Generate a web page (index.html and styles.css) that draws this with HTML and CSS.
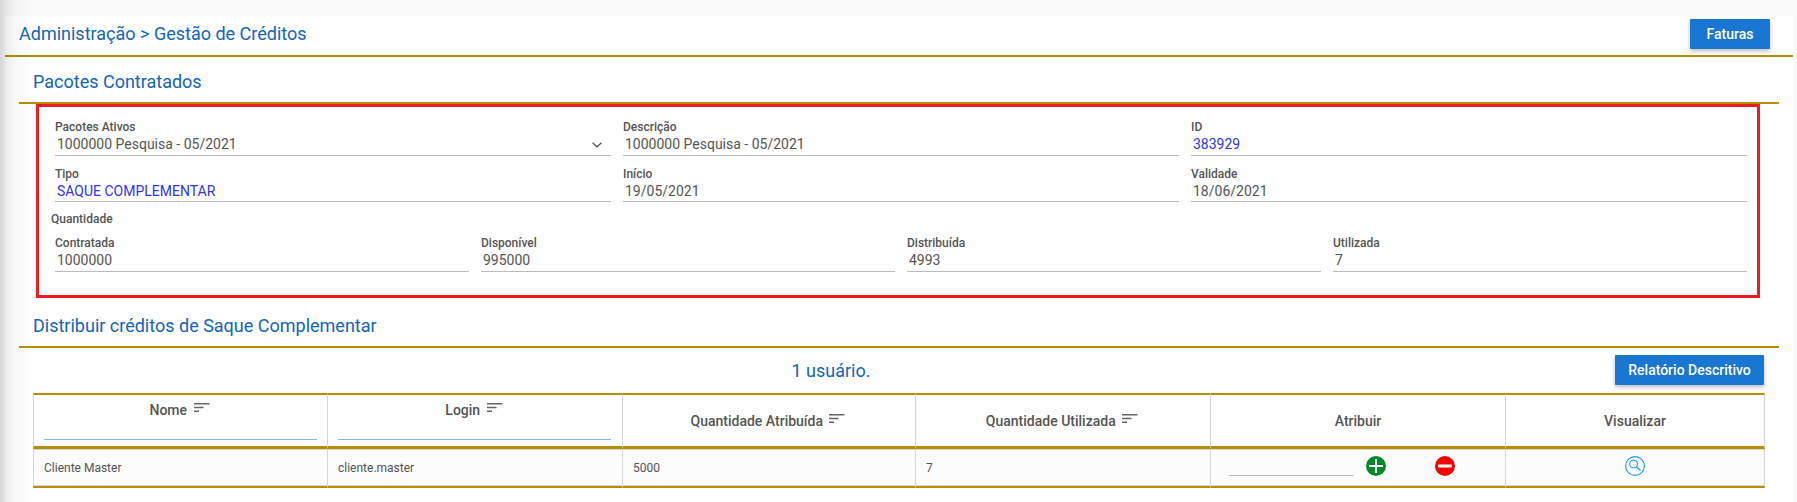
FILE: index.html
```html
<!DOCTYPE html>
<html lang="pt-BR">
<head>
<meta charset="utf-8">
<title>Gestão de Créditos</title>
<link rel="stylesheet" href="styles.css">
</head>
<body>
<div class="page">
  <div class="edge-shade"></div>
  <main class="panel">
    <header class="top-bar">
      <h1 class="page-title">Administração &gt; Gestão de Créditos</h1>
      <button class="btn" type="button">Faturas</button>
    </header>

    <section class="section">
      <h2 class="section-title section-title-first">Pacotes Contratados</h2>
      <div class="highlight-box">
        <div class="grid-three">
          <div class="field">
            <div class="field-label">Pacotes Ativos</div>
            <div class="field-value field-select">
              <span>1000000 Pesquisa - 05/2021</span>
              <svg class="chevron" width="10" height="6" viewBox="0 0 10 6"><path d="M.6.8 5 4.8 9.4.8" fill="none" stroke="#555" stroke-width="1.3"/></svg>
            </div>
          </div>
          <div class="field">
            <div class="field-label">Descrição</div>
            <div class="field-value">1000000 Pesquisa - 05/2021</div>
          </div>
          <div class="field">
            <div class="field-label">ID</div>
            <div class="field-value value-blue">383929</div>
          </div>
          <div class="field field-short">
            <div class="field-label">Tipo</div>
            <div class="field-value value-blue">SAQUE COMPLEMENTAR</div>
          </div>
          <div class="field field-short">
            <div class="field-label">Início</div>
            <div class="field-value">19/05/2021</div>
          </div>
          <div class="field field-short">
            <div class="field-label">Validade</div>
            <div class="field-value">18/06/2021</div>
          </div>
        </div>
        <div class="group-label">Quantidade</div>
        <div class="grid-four">
          <div class="field">
            <div class="field-label">Contratada</div>
            <div class="field-value">1000000</div>
          </div>
          <div class="field">
            <div class="field-label">Disponível</div>
            <div class="field-value">995000</div>
          </div>
          <div class="field">
            <div class="field-label">Distribuída</div>
            <div class="field-value">4993</div>
          </div>
          <div class="field">
            <div class="field-label">Utilizada</div>
            <div class="field-value">7</div>
          </div>
        </div>
      </div>
    </section>

    <section class="section">
      <h2 class="section-title section-title-second">Distribuir créditos de Saque Complementar</h2>
      <div class="toolbar">
        <div class="user-count">1 usuário.</div>
        <button class="btn btn-wide" type="button">Relatório Descritivo</button>
      </div>
      <table class="data-table">
        <colgroup>
          <col class="col-a"><col class="col-b"><col class="col-c"><col class="col-d"><col class="col-e"><col class="col-f">
        </colgroup>
        <thead>
          <tr>
            <th class="th-filter">
              <div class="th-label">Nome <svg class="sort" width="16" height="10" viewBox="0 0 16 10"><path d="M0 0h15.5v1.5H0zM0 3.8h9.5v1.5H0zM0 7.6h5v1.5H0z" fill="#666"/></svg></div>
              <input class="filter-input" type="text" aria-label="Nome">
            </th>
            <th class="th-filter">
              <div class="th-label">Login <svg class="sort" width="16" height="10" viewBox="0 0 16 10"><path d="M0 0h15.5v1.5H0zM0 3.8h9.5v1.5H0zM0 7.6h5v1.5H0z" fill="#666"/></svg></div>
              <input class="filter-input" type="text" aria-label="Login">
            </th>
            <th><div class="th-label">Quantidade Atribuída <svg class="sort" width="16" height="10" viewBox="0 0 16 10"><path d="M0 0h15.5v1.5H0zM0 3.8h9.5v1.5H0zM0 7.6h5v1.5H0z" fill="#666"/></svg></div></th>
            <th><div class="th-label">Quantidade Utilizada <svg class="sort" width="16" height="10" viewBox="0 0 16 10"><path d="M0 0h15.5v1.5H0zM0 3.8h9.5v1.5H0zM0 7.6h5v1.5H0z" fill="#666"/></svg></div></th>
            <th><div class="th-label">Atribuir</div></th>
            <th class="th-last"><div class="th-label">Visualizar</div></th>
          </tr>
        </thead>
        <tbody>
          <tr>
            <td>Cliente Master</td>
            <td>cliente.master</td>
            <td>5000</td>
            <td>7</td>
            <td class="td-actions">
              <div class="assign">
                <input class="assign-input" type="text" aria-label="Atribuir">
                <svg class="icon" width="20" height="20" viewBox="0 0 20 20"><circle cx="10" cy="10" r="10" fill="#00892b"/><path d="M3 10h14M10 3v14" stroke="#fff" stroke-width="2"/></svg>
                <svg class="icon icon-minus" width="20" height="20" viewBox="0 0 20 20"><circle cx="10" cy="10" r="10" fill="#f50000"/><rect x="3" y="8.5" width="14" height="3" rx="1" fill="#fff"/></svg>
              </div>
            </td>
            <td class="td-actions td-view th-last">
              <svg class="icon" width="20" height="20" viewBox="0 0 20 20"><circle cx="10" cy="10" r="9.4" fill="none" stroke="#1e9bf5" stroke-width="1.1"/><circle cx="8.6" cy="8" r="4" fill="none" stroke="#1e9bf5" stroke-width="1"/><path d="M11.6 11 15.6 14.6" stroke="#1e9bf5" stroke-width="1.3"/></svg>
            </td>
          </tr>
        </tbody>
      </table>
    </section>
  </main>
</div>
</body>
</html>
```
FILE: styles.css
```css
* { box-sizing: border-box; }

html, body {
  margin: 0;
  padding: 0;
}

body {
  font-family: Roboto, "Liberation Sans", sans-serif;
  background: #fafafa;
  color: #555;
}

.page {
  position: relative;
  width: 1797px;
  height: 502px;
  overflow: hidden;
  padding: 16px 4px 0 5px;
  background: #fafafa;
}

.edge-shade {
  position: absolute;
  top: 0;
  bottom: 0;
  left: 0;
  width: 34px;
  background: linear-gradient(to right, rgba(0, 0, 0, .14) 0, rgba(0, 0, 0, .07) 7px, rgba(0, 0, 0, .02) 18px, rgba(0, 0, 0, 0) 100%);
  pointer-events: none;
}

.panel {
  height: 486px;
  background: #fff;
}

.top-bar {
  display: flex;
  justify-content: space-between;
  align-items: flex-start;
  height: 41px;
  padding: 3px 23px 0 14px;
  border-bottom: 2px solid #b88f00;
}

.page-title,
.section-title {
  margin: 0;
  font-size: 18px;
  line-height: 24px;
  font-weight: 400;
  color: #1565b8;
}

.page-title { margin-top: 3px; }

.btn {
  height: 30px;
  width: 80px;
  padding: 0;
  border: 0;
  border-radius: 1px;
  background: #1976d2;
  color: #fff;
  font-family: inherit;
  font-size: 14px;
  font-weight: 500;
  box-shadow: 0 2px 4px rgba(0, 0, 0, .28);
}

.btn-wide { width: 149px; }

.section { margin: 0 14px; }

.section-title {
  padding-bottom: 8px;
  border-bottom: 2px solid #b88f00;
}

.section-title-first { padding-top: 13px; padding-left: 14px; }
.section-title-second { padding-top: 16px; padding-left: 14px; }

.highlight-box {
  margin-left: 17px;
  width: 1724px;
  height: 194px;
  padding: 13px 10px 0 16px;
  border: 3px solid #ed1c24;
}

.grid-three {
  display: grid;
  grid-template-columns: repeat(3, 556px);
  column-gap: 12px;
  row-gap: 11px;
}

.grid-four {
  display: grid;
  grid-template-columns: repeat(4, 414px);
  column-gap: 12px;
  margin-top: 10px;
}

.field {
  height: 36px;
  border-bottom: 1px solid #bdbdbd;
}

.field-short { height: 35px; }

.field-label,
.group-label {
  font-size: 12px;
  line-height: 14px;
  font-weight: 500;
  color: #555;
}

.group-label {
  margin: 10px 0 0 -4px;
}

.field-value {
  margin-top: 1px;
  padding-left: 2px;
  font-size: 14px;
  line-height: 19px;
  color: #555;
}

.value-blue { color: #3333f5; }

.field-select {
  display: flex;
  justify-content: space-between;
  align-items: center;
  padding-right: 9px;
}

.chevron { margin-top: 1px; }

.toolbar {
  display: flex;
  justify-content: space-between;
  align-items: flex-start;
  height: 45px;
  padding: 7px 15px 0 28px;
}

.user-count {
  flex: 1;
  padding-top: 4px;
  text-align: center;
  font-size: 18px;
  line-height: 24px;
  color: #1565b8;
}

.data-table {
  margin-left: 14px;
  width: 1732px;
  table-layout: fixed;
  border-collapse: separate;
  border-spacing: 0;
}

.col-a { width: 294px; }
.col-b { width: 295px; }
.col-c { width: 293px; }
.col-d { width: 295px; }
.col-e { width: 295px; }
.col-f { width: 260px; }

.data-table th {
  height: 56px;
  padding: 0 10px;
  border-top: 2px solid #b88f00;
  border-bottom: 3px solid #b88f00;
  border-left: 1px solid #d6d6d6;
  font-size: 14px;
  font-weight: 500;
  color: #555;
  text-align: center;
  vertical-align: middle;
}

.data-table th.th-filter {
  padding-top: 6px;
  vertical-align: top;
}

.th-label {
  line-height: 18px;
  white-space: nowrap;
}

.sort {
  margin-left: 3px;
  margin-right: 2px;
  vertical-align: 2px;
}

.filter-input {
  display: block;
  width: 273px;
  height: 20px;
  margin-top: 1px;
  padding: 0;
  border: 0;
  border-bottom: 1px solid #8fb4dd;
  background: transparent;
  outline: 0;
}

.data-table th.th-last,
.data-table td.th-last {
  border-right: 1px solid #d6d6d6;
}

.data-table td {
  height: 39px;
  padding: 0 10px;
  border-left: 1px solid #d6d6d6;
  border-bottom: 2px solid #b88f00;
  box-shadow: inset 0 1px 0 #d6d6d6, inset 0 -1px 0 #d6d6d6;
  background: #fcfcfc;
  font-size: 12px;
  color: #555;
}

.data-table td.td-actions {
  padding-top: 7px;
  vertical-align: top;
}

.data-table td.td-view { text-align: center; }

.assign {
  display: flex;
  align-items: flex-end;
  padding-left: 8px;
}

.assign-input {
  width: 125px;
  height: 20px;
  padding: 0;
  border: 0;
  border-bottom: 1px solid #bdbdbd;
  background: transparent;
  outline: 0;
}

.icon {
  display: block;
  flex: none;
  margin-left: 12px;
}

.icon-minus { margin-left: 49px; }

.td-view .icon { margin: 0 auto; }
```
